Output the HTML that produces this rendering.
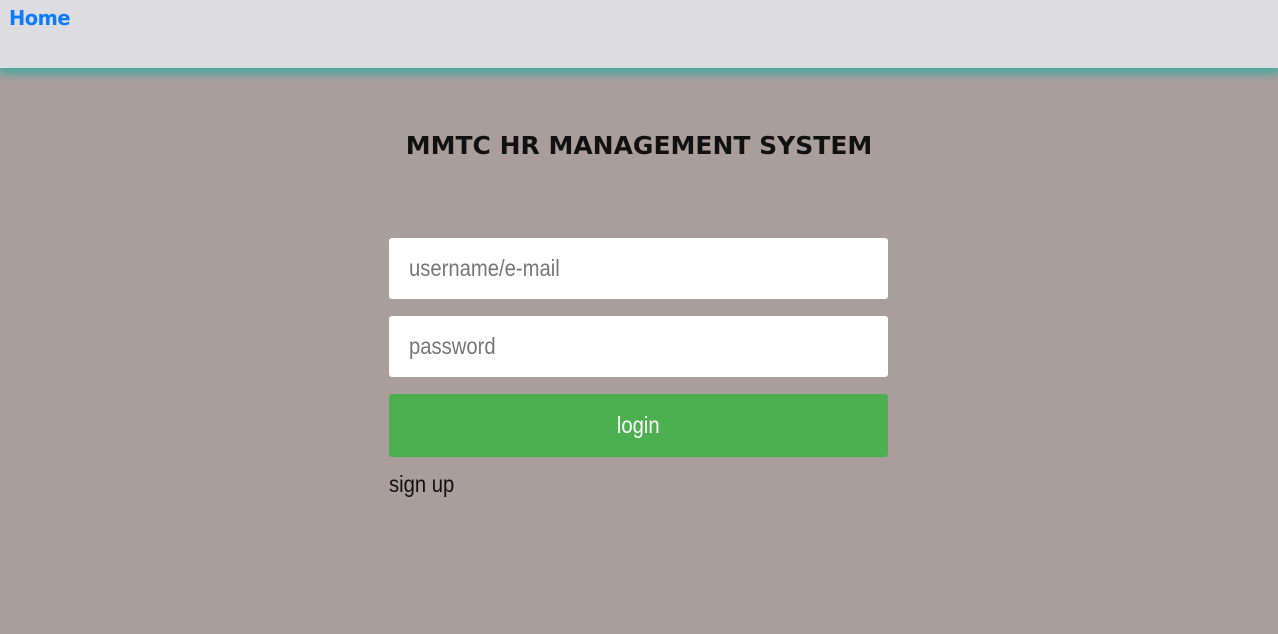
<!DOCTYPE html>
<html><head><style>
body{margin:0;width:1278px;height:634px;background:#aa9e9d;font-family:"Liberation Sans",sans-serif;overflow:hidden;position:relative}
.hdr{position:absolute;left:0;top:0;width:1278px;height:68px;background:#dddce1;box-shadow:0 3px 10px 2px #3aa8a0}
.home{position:absolute;left:9px;top:6px;color:#0a7bff;font:bold 20px "DejaVu Sans",sans-serif;letter-spacing:-0.5px;transform:scaleX(0.97);transform-origin:left}
h1{position:absolute;left:0;width:1278px;top:131px;margin:0;text-align:center;font:bold 25px "DejaVu Sans",sans-serif;color:#111}
.in{position:absolute;left:389px;width:499px;height:61px;background:#fff;border-radius:3px;box-sizing:border-box;padding-left:20px;line-height:61px;font-size:23px;color:#777}
.s{display:inline-block;transform:scaleX(0.88);transform-origin:left}
.btn{position:absolute;left:389px;top:394px;width:499px;height:63px;background:#4caf50;border-radius:3px;color:#fff;text-align:center;line-height:63px;font-size:23px}
.btn .s{transform-origin:center}
.su{position:absolute;left:389px;top:471px;font-size:23px;color:#111}
</style></head><body>
<div class="hdr"><div class="home">Home</div></div>
<h1>MMTC HR MANAGEMENT SYSTEM</h1>
<div class="in" style="top:238px"><span class="s">username/e-mail</span></div>
<div class="in" style="top:316px"><span class="s">password</span></div>
<div class="btn"><span class="s">login</span></div>
<div class="su"><span class="s">sign up</span></div>
</body></html>
